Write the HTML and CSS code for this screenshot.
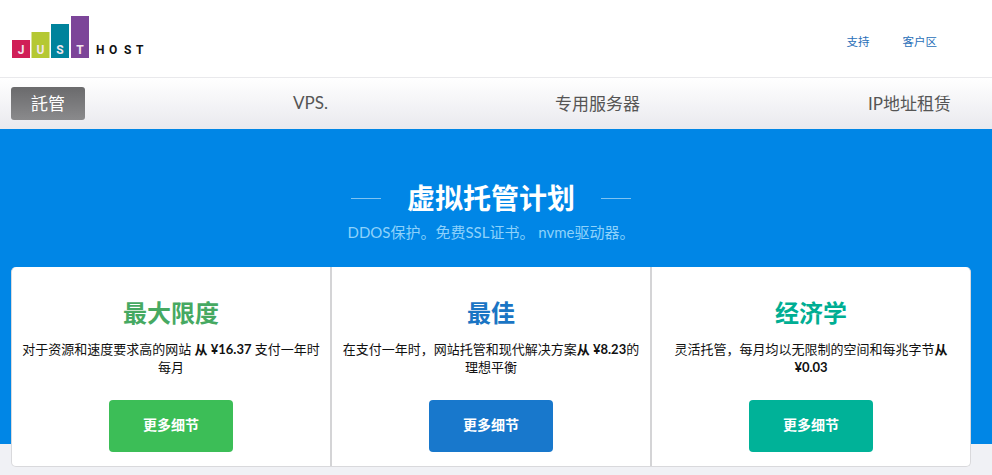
FILE: index.html
```html
<!DOCTYPE html>
<html lang="zh-CN">
<head>
<meta charset="utf-8">
<title>虚拟托管计划</title>
<link rel="stylesheet" href="styles.css">
</head>
<body>
<header class="top">
  <svg class="logo" width="135" height="44" viewBox="0 0 135 44">
    <rect x="0" y="24" width="18" height="18" fill="#d01f57"/>
    <rect x="19.500" y="16" width="18" height="26" fill="#b5c833"/>
    <rect x="39" y="8" width="18" height="34" fill="#00839c"/>
    <rect x="59" y="0" width="18" height="42" fill="#7c4599"/>
    <text class="logo-in" x="9" y="38" text-anchor="middle">J</text>
    <text class="logo-in" x="28.500" y="38" text-anchor="middle">U</text>
    <text class="logo-in" x="48" y="38" text-anchor="middle">S</text>
    <text class="logo-in" x="68" y="38" text-anchor="middle">T</text>
    <text class="logo-out" x="84" y="38">H</text>
    <text class="logo-out" x="97" y="38">O</text>
    <text class="logo-out" x="112" y="38">S</text>
    <text class="logo-out" x="124" y="38">T</text>
  </svg>
  <nav class="util">
    <a class="util-link">支持</a>
    <a class="util-link">客户区</a>
  </nav>
</header>
<nav class="tabs">
  <a class="tab-active">託管</a>
  <a class="tab tab-first">VPS.</a>
  <a class="tab">专用服务器</a>
  <a class="tab tab-last">IP地址租赁</a>
</nav>
<main class="hero">
  <div class="title-row">
    <span class="rule"></span>
    <h1 class="title">虚拟托管计划</h1>
    <span class="rule"></span>
  </div>
  <p class="sub">DDOS保护。免费SSL证书。 nvme驱动器。</p>
  <section class="cards">
    <article class="card">
      <h2 class="card-title green">最大限度</h2>
      <p class="card-text">对于资源和速度要求高的网站 <b>从 ¥16.37</b> 支付一年时每月</p>
      <a class="btn bg-green">更多细节</a>
    </article>
    <article class="card">
      <h2 class="card-title blue">最佳</h2>
      <p class="card-text">在支付一年时，网站托管和现代解决方案<b>从 ¥8.23</b>的理想平衡</p>
      <a class="btn bg-blue">更多细节</a>
    </article>
    <article class="card">
      <h2 class="card-title teal">经济学</h2>
      <p class="card-text">灵活托管，每月均以无限制的空间和每兆字节<b>从 ¥0.03</b></p>
      <a class="btn bg-teal">更多细节</a>
    </article>
  </section>
</main>
</body>
</html>
```
FILE: styles.css
```css
* { box-sizing: border-box; }
html, body { margin: 0; height: 100%; overflow: hidden; }
body {
  background: #f0f1f5;
  font-family: Lato, "Noto Sans CJK SC", sans-serif;
}
.top {
  height: 78px;
  background: #fff;
  border-bottom: 1px solid #e9e9ec;
  display: flex;
  align-items: flex-start;
  justify-content: space-between;
  padding: 16px 55px 0 12px;
}
.logo { display: block; }
.logo-in { font: 700 12px Roboto, sans-serif; fill: #f2e6ee; }
.logo-out { font: 700 12px Roboto, sans-serif; fill: #111; }
.util { display: flex; gap: 33px; padding-top: 18px; }
.util-link { font-size: 11.500px; line-height: 16px; color: #2a6fb8; }
.tabs {
  height: 51px;
  background: linear-gradient(#fff, #e9e9ee);
  display: flex;
  align-items: center;
  padding: 0 11px 3px;
}
.tab-active {
  width: 74px;
  height: 33px;
  margin-top: 3px;
  border-radius: 3px;
  background: linear-gradient(#6a6a6c, #8a8a8c);
  color: #fff;
  font-size: 17px;
  line-height: 33px;
  text-align: center;
}
.tab { margin-left: 227px; font-size: 17px; color: #555; }
.tab-first { margin-left: 208px; }
.tab-last { margin-left: 228px; }
.hero {
  height: 315px;
  background: #0086e6;
  padding: 0 21px 0 11px;
}
.title-row {
  display: flex;
  align-items: center;
  justify-content: center;
  gap: 26px;
  padding-top: 50px;
  height: 88px;
}
.rule { width: 30px; height: 1px; background: #7fc3f2; }
.title { margin: 0; font-size: 28px; line-height: 38px; font-weight: 700; color: #fff; }
.sub {
  margin: 5px 0 0;
  text-align: center;
  font-size: 15px;
  line-height: 20px;
  color: #8ed2fb;
}
.cards {
  width: 960px;
  height: 200px;
  margin-top: 25px;
  display: grid;
  grid-template-columns: 320px 320px 320px;
  background: #fff;
  border: 1px solid #d9d9dc;
  border-top: 0;
  border-radius: 5px;
}
.card {
  display: flex;
  flex-direction: column;
  align-items: center;
  padding: 29px 10px 0;
  border-right: 2px solid #d4d4d6;
  text-align: center;
}
.card:last-child { border-right-color: transparent; }
.card-title { margin: 0; font-size: 24px; line-height: 34px; font-weight: 700; }
.card-text {
  margin: 10px 0 0;
  height: 36px;
  font-size: 13px;
  line-height: 18px;
  color: #111;
}
.btn {
  width: 124px;
  height: 52px;
  margin-top: 24px;
  border-radius: 4px;
  color: #fff;
  font-size: 14px;
  font-weight: 700;
  line-height: 50px;
}
.green { color: #46a962; }
.blue { color: #1a75c4; }
.teal { color: #00ae93; }
.bg-green { background: #3cbe57; }
.bg-blue { background: #1878cc; }
.bg-teal { background: #00b298; }
```
